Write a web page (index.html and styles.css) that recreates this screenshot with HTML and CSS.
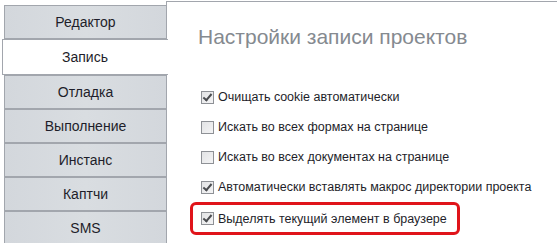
FILE: index.html
```html
<!DOCTYPE html>
<html lang="ru">

<head>
    <meta charset="UTF-8">
    <title>Настройки записи проектов</title>
    <link rel="stylesheet" href="styles.css">
</head>

<body>
    <div class="settings">
        <ul class="settings--tabs">
            <li><a href="javascript:;">Редактор</a></li>
            <li class="actived"><a href="javascript:;">Запись</a></li>
            <li><a href="javascript:;">Отладка</a></li>
            <li><a href="javascript:;">Выполнение</a></li>
            <li><a href="javascript:;">Инстанс</a></li>
            <li><a href="javascript:;">Каптчи</a></li>
            <li><a href="javascript:;">SMS</a></li>
        </ul>

        <div class="settings--panel">
            <h1 class="panel-title">Настройки записи проектов</h1>

            <ul class="options">
                <li class="option">
                    <span class="check checked"></span>
                    <span>Очищать cookie автоматически</span>
                </li>
                <li class="option">
                    <span class="check"></span>
                    <span>Искать во всех формах на странице</span>
                </li>
                <li class="option">
                    <span class="check"></span>
                    <span>Искать во всех документах на странице</span>
                </li>
                <li class="option">
                    <span class="check checked"></span>
                    <span>Автоматически вставлять макрос директории проекта</span>
                </li>
                <li class="option option--marked">
                    <span class="check checked"></span>
                    <span>Выделять текущий элемент в браузере</span>
                </li>
            </ul>
        </div>
    </div>
</body>

</html>
```

FILE: styles.css
```css
/* Variables */
:root {
    --color-border: #a2a6ad;
    --color-tab: #d6dade;
    --color-text: #1e1e2a;
    --color-title: #858a90;
    --color-mark: #e0141a;
}

/* Base */
body {
    margin: 0;
    background: #ffffff;
    font-family: "Liberation Sans", Arial, sans-serif;
    color: var(--color-text);
}

ul {
    margin: 0;
    padding: 0;
    list-style: none;
}

a {
    text-decoration: none;
    color: inherit;
}

/* Layout */
.settings {
    display: flex;
    width: 557px;
    height: 243px;
    overflow: hidden;
}

/* Tabs */
.settings--tabs {
    width: 163px;
    padding: 5px 0 0 4px;
    margin-right: -1px;
    position: relative;
    z-index: 1;
    flex-shrink: 0;
}

.settings--tabs li {
    height: 32px;
    border: 1px solid var(--color-border);
    background: linear-gradient(to right, #d3d7dc, #d9dde1 50%, #d3d7dc);
}

.settings--tabs li a {
    display: block;
    line-height: 32px;
    font-size: 14px;
    text-align: center;
}

.settings--tabs li.actived {
    background: #ffffff;
    margin-left: -2px;
    border-right: 0;
    height: 34px;
    margin-right: -1px;
    padding-right: 1px;
}

.settings--tabs li.actived a {
    line-height: 34px;
}

/* Panel */
.settings--panel {
    flex: 1;
    margin-top: 1px;
    border-top: 1px solid var(--color-border);
    border-left: 1px solid var(--color-border);
    padding: 0 0 0 30px;
}

.panel-title {
    margin: 22px 0 32px 1px;
    font-size: 21px;
    font-weight: normal;
    line-height: 26px;
    color: var(--color-title);
}

.options {
    margin-left: 4px;
}

.option {
    display: flex;
    align-items: center;
    gap: 4px;
    height: 30px;
    font-size: 12.5px;
}

.option--marked {
    width: 256px;
    height: 27px;
    margin-left: -11px;
    padding-left: 8px;
    border: 3px solid var(--color-mark);
    border-radius: 6px;
}

/* Checkbox */
.check {
    width: 11px;
    height: 11px;
    border: 1px solid #8e9196;
    background: linear-gradient(135deg, #e2e3e5, #f4f4f5);
    position: relative;
    flex-shrink: 0;
}

.check.checked::after {
    content: "";
    position: absolute;
    left: 3px;
    top: 0px;
    width: 3px;
    height: 7px;
    border: solid #4a4c50;
    border-width: 0 2px 2px 0;
    transform: rotate(40deg);
}
```
